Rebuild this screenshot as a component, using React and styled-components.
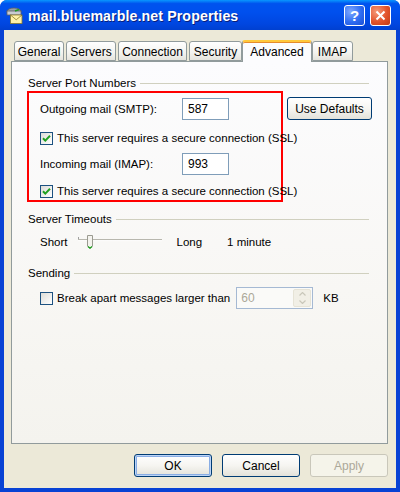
import React from 'react'
import styled, { createGlobalStyle } from 'styled-components'

const GlobalStyle = createGlobalStyle`
    html, body {
        margin: 0;
        padding: 0;
        background: #ffffff;
    }
    body {
        font-family: "Liberation Sans", Arial, sans-serif;
        font-size: 11.5px;
        color: #000;
    }
`

const Window = styled.div`
    width: 400px;
    height: 492px;
    display: flex;
    flex-direction: column;
    background: #0842d4;
    border-radius: 7px 7px 0 0;
    overflow: hidden;
    box-sizing: border-box;
`

const TitleBar = styled.div`
    height: 30px;
    display: flex;
    align-items: center;
    padding: 0 9px 0 6px;
    gap: 5px;
    background: linear-gradient(180deg, #0997ff 0%, #0053ee 12%, #0050ee 40%, #0046e0 80%, #0040d0 100%);
`

const Title = styled.div`
    flex: 1;
    color: #fff;
    font-weight: bold;
    font-size: 14.2px;
    letter-spacing: 0.1px;
    text-shadow: 1px 1px 0 #0a1f7a;
    padding-top: 1px;
`

const CaptionButton = styled.div`
    width: 21px;
    height: 21px;
    box-sizing: border-box;
    border: 1px solid #fff;
    border-radius: 3px;
    display: flex;
    align-items: center;
    justify-content: center;
    background: ${p => p.close
        ? 'radial-gradient(circle at 30% 30%, #f59a7a 0%, #e2532b 55%, #c23a14 100%)'
        : 'radial-gradient(circle at 30% 30%, #7fa8ff 0%, #2f6df2 55%, #1a4fd6 100%)'};
    color: #fff;
    font-weight: bold;
    font-size: 15px;
`

const Frame = styled.div`
    flex: 1;
    margin: 0 4px 4px;
    background: #ece9d8;
    display: flex;
    flex-direction: column;
    padding: 10px 8px 11px 7px;
`

const TabStrip = styled.div`
    display: flex;
    align-items: flex-end;
    padding-left: 3px;
    height: 21px;
    position: relative;
    z-index: 1;
`

const Tab = styled.div`
    box-sizing: border-box;
    width: ${p => p.w}px;
    height: ${p => (p.active ? '22px' : '20px')};
    margin-right: ${p => (p.active ? '0' : '2px')};
    margin-left: ${p => (p.active ? '-2px' : '0')};
    margin-bottom: ${p => (p.active ? '-1px' : '0')};
    display: flex;
    align-items: center;
    justify-content: center;
    border: 1px solid #919b9c;
    border-bottom: ${p => (p.active ? 'none' : '1px solid #919b9c')};
    border-top: ${p => (p.active ? '2px solid #ffc83c' : '1px solid #919b9c')};
    border-radius: 3px 3px 0 0;
    background: ${p => (p.active ? '#fcfcfe' : 'linear-gradient(180deg, #ffffff 0%, #f3f3ef 60%, #e5e4dd 100%)')};
    box-shadow: ${p => (p.active ? 'inset 0 1px 0 #e68b2c' : 'none')};
    font-size: 12px;
    padding-top: ${p => (p.active ? '0' : '2px')};
`

const Panel = styled.div`
    flex: 1;
    border: 1px solid #919b9c;
    background: linear-gradient(180deg, #fcfcfe 0%, #f8f7f4 60%, #f4f3ee 100%);
    padding: 10px 17px 0 16px;
    display: flex;
    flex-direction: column;
`

const GroupHeader = styled.div`
    display: flex;
    align-items: center;
    gap: 4px;
    height: 14px;
    margin-top: ${p => p.top || 0}px;
    padding-right: 1px;

    &::after {
        content: '';
        flex: 1;
        height: 1px;
        background: #d0d0bf;
        margin-top: 1px;
    }
`

const PortRow = styled.div`
    display: flex;
    align-items: flex-start;
    gap: 4px;
    margin-top: 1px;
`

const Highlight = styled.div`
    width: 256px;
    height: 111px;
    flex-shrink: 0;
    box-sizing: border-box;
    border: 2px solid #ff0000;
    margin-left: -1px;
    padding: 5px 0 0 11px;
    display: flex;
    flex-direction: column;
    white-space: nowrap;
`

const FieldRow = styled.div`
    display: flex;
    align-items: center;
    height: 22px;
    margin-top: ${p => p.top || 0}px;
`

const FieldLabel = styled.div`
    width: 142px;
`

const TextBox = styled.div`
    width: 47px;
    height: 22px;
    box-sizing: border-box;
    border: 1px solid #7f9db9;
    background: #fff;
    display: flex;
    align-items: center;
    padding-left: 5px;
    font-size: 12px;
`

const CheckRow = styled.div`
    display: flex;
    align-items: center;
    gap: 4px;
    height: 14px;
    white-space: nowrap;
    margin-top: ${p => p.top || 0}px;
`

const Box = styled.div`
    width: 13px;
    height: 13px;
    flex-shrink: 0;
    box-sizing: border-box;
    border: 1px solid #1c5180;
    background: linear-gradient(135deg, #dcdcd7 0%, #ffffff 100%);
    display: flex;
    align-items: center;
    justify-content: center;
`

const XpButton = styled.div`
    width: ${p => p.w || 75}px;
    height: 23px;
    flex-shrink: 0;
    box-sizing: border-box;
    border: 1px solid ${p => (p.disabled ? '#c9c7ba' : '#003c74')};
    border-radius: 3px;
    display: flex;
    align-items: center;
    justify-content: center;
    font-size: 12px;
    margin-top: ${p => p.top || 0}px;
    color: ${p => (p.disabled ? '#aca899' : '#000')};
    background: ${p => (p.disabled ? '#f5f4ea' : 'linear-gradient(180deg, #ffffff 0%, #f6f5f1 50%, #e3e2da 100%)')};
    box-shadow: ${p => (p.focus ? 'inset 0 0 0 1px #bcd4f6, inset 0 0 0 2px #89ade4' : 'none')};
`

const SliderRow = styled.div`
    display: flex;
    align-items: center;
    height: 16px;
    margin-top: 8px;
    padding-left: 12px;
`

const Spaced = styled.span`
    margin-left: ${p => p.left || 0}px;
`

const SpinBox = styled.div`
    width: 77px;
    height: 22px;
    box-sizing: border-box;
    border: 1px solid #a5b9d3;
    background: #fafaf8;
    display: flex;
    align-items: stretch;
    margin-left: 6px;
    color: #aca899;
    font-size: 12px;
`

const SpinText = styled.div`
    flex: 1;
    display: flex;
    align-items: center;
    padding-left: 4px;
`

const SpinArrows = styled.div`
    width: 16px;
    margin: 1px;
    display: flex;
    flex-direction: column;
    border-radius: 2px;
    background: #f1efe6;
    border: 1px solid #e6e3d6;
    align-items: center;
    justify-content: space-around;
`

const SendingRow = styled.div`
    display: flex;
    align-items: center;
    margin-top: 7px;
    margin-left: 12px;
`

const Footer = styled.div`
    display: flex;
    justify-content: flex-end;
    gap: 10px;
    margin-top: 10px;
`

const Check = ({ checked }) => (
    <Box>
        {checked && (
            <svg width="9" height="9" viewBox="0 0 9 9">
                <path d="M1 4.2 L3.3 6.6 L8 1.8" fill="none" stroke="#21a121" strokeWidth="2" />
            </svg>
        )}
    </Box>
)

const MailIcon = () => (
    <svg width="17" height="17" viewBox="0 0 17 17">
        <ellipse cx="8" cy="4.5" rx="7" ry="3.5" fill="#9aa0a8" stroke="#5b6068" strokeWidth="0.8" />
        <rect x="1" y="4" width="14" height="4" fill="#c8ccd2" stroke="#5b6068" strokeWidth="0.8" />
        <path d="M9 4 L13 2.5" stroke="#1f9b1f" strokeWidth="1.5" />
        <rect x="4.5" y="8" width="11.5" height="8.5" fill="#fff2a8" stroke="#8a7a2a" strokeWidth="0.8" />
        <path d="M4.5 8 L10.2 12.8 L16 8" fill="none" stroke="#8a7a2a" strokeWidth="0.8" />
    </svg>
)

const Slider = () => (
    <svg width="84" height="16" viewBox="0 0 84 16" style={{ marginLeft: 10 }}>
        <rect x="0" y="3" width="1" height="2" fill="#a0a0a0" />
        <rect x="0" y="5" width="84" height="1.2" fill="#b8b7ae" />
        <rect x="0" y="6.2" width="84" height="1" fill="#ffffff" />
        <path d="M9.5 1.5 H14.5 V12 L12 14.5 L9.5 12 Z" fill="#f4f3ee" stroke="#9a9a90" strokeWidth="1" />
        <path d="M10 12.5 L12 14.3 L14 12.5" fill="none" stroke="#21a121" strokeWidth="1.2" />
    </svg>
)

const tabs = [
    { label: 'General', w: 50 },
    { label: 'Servers', w: 50 },
    { label: 'Connection', w: 69 },
    { label: 'Security', w: 53 },
    { label: 'Advanced', w: 70, active: true },
    { label: 'IMAP', w: 41 },
]

export default function App() {
    return (
        <>
            <GlobalStyle />
            <Window>
                <TitleBar>
                    <MailIcon />
                    <Title>mail.bluemarble.net Properties</Title>
                    <CaptionButton>?</CaptionButton>
                    <CaptionButton close>
                        <svg width="11" height="11" viewBox="0 0 11 11">
                            <path d="M1.5 1.5 L9.5 9.5 M9.5 1.5 L1.5 9.5" stroke="#fff" strokeWidth="2" />
                        </svg>
                    </CaptionButton>
                </TitleBar>
                <Frame>
                    <TabStrip>
                        {tabs.map(t => (
                            <Tab key={t.label} w={t.w} active={t.active}>{t.label}</Tab>
                        ))}
                    </TabStrip>
                    <Panel>
                        <GroupHeader top={4}>Server Port Numbers</GroupHeader>
                        <PortRow>
                            <Highlight>
                                <FieldRow>
                                    <FieldLabel>Outgoing mail (SMTP):</FieldLabel>
                                    <TextBox>587</TextBox>
                                </FieldRow>
                                <CheckRow top={11}>
                                    <Check checked />
                                    <span>This server requires a secure connection (SSL)</span>
                                </CheckRow>
                                <FieldRow top={8}>
                                    <FieldLabel>Incoming mail (IMAP):</FieldLabel>
                                    <TextBox>993</TextBox>
                                </FieldRow>
                                <CheckRow top={9}>
                                    <Check checked />
                                    <span>This server requires a secure connection (SSL)</span>
                                </CheckRow>
                            </Highlight>
                            <XpButton w={85} top={6}>Use Defaults</XpButton>
                        </PortRow>
                        <GroupHeader top={10}>Server Timeouts</GroupHeader>
                        <SliderRow>
                            <span>Short</span>
                            <Slider />
                            <Spaced left={15}>Long</Spaced>
                            <Spaced left={25}>1 minute</Spaced>
                        </SliderRow>
                        <GroupHeader top={16}>Sending</GroupHeader>
                        <SendingRow>
                            <Check />
                            <Spaced left={4}>Break apart messages larger than</Spaced>
                            <SpinBox>
                                <SpinText>60</SpinText>
                                <SpinArrows>
                                    <svg width="7" height="4" viewBox="0 0 7 4"><path d="M0.5 3.5 L3.5 0.5 L6.5 3.5" fill="none" stroke="#c9c7ba" strokeWidth="1.2" /></svg>
                                    <svg width="7" height="4" viewBox="0 0 7 4"><path d="M0.5 0.5 L3.5 3.5 L6.5 0.5" fill="none" stroke="#c9c7ba" strokeWidth="1.2" /></svg>
                                </SpinArrows>
                            </SpinBox>
                            <Spaced left={10}>KB</Spaced>
                        </SendingRow>
                    </Panel>
                    <Footer>
                        <XpButton w={78} focus>OK</XpButton>
                        <XpButton w={78}>Cancel</XpButton>
                        <XpButton w={78} disabled>Apply</XpButton>
                    </Footer>
                </Frame>
            </Window>
        </>
    )
}
